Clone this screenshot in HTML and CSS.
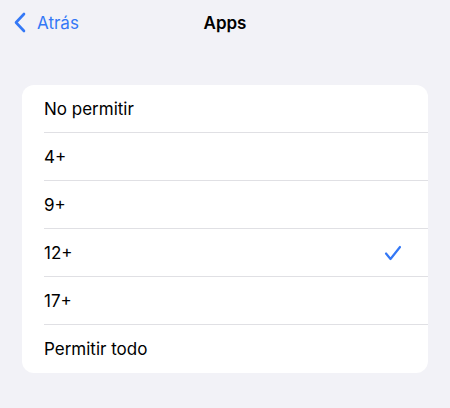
FILE: index.html
```html
<!DOCTYPE html>
<html>
<head>
<meta charset="utf-8">
<link rel="stylesheet" href="styles.css">
</head>
<body>
<div class="nav">
  <div class="back">
    <svg class="chev" width="12" height="21" viewBox="0 0 12 21"><path d="M10 2 L2 10.5 L10 19" fill="none" stroke="#3478f6" stroke-width="2.6" stroke-linecap="round" stroke-linejoin="round"/></svg>
    <span>Atrás</span>
  </div>
  <div class="title">Apps</div>
</div>
<div class="card">
  <div class="row"><span>No permitir</span></div>
  <div class="row"><span>4+</span></div>
  <div class="row"><span>9+</span></div>
  <div class="row"><span>12+</span>
    <svg class="check" width="18" height="16" viewBox="0 0 18 16"><path d="M2 8.5 L6.5 14 L16 2" fill="none" stroke="#3478f6" stroke-width="2.2" stroke-linecap="round" stroke-linejoin="round"/></svg>
  </div>
  <div class="row"><span>17+</span></div>
  <div class="row"><span>Permitir todo</span></div>
</div>
</body>
</html>
```
FILE: styles.css
```css
html, body { margin: 0; padding: 0; }
body {
  background: #f2f2f7;
  font-family: Inter, "Noto Sans", sans-serif;
  color: #000;
  width: 450px;
  height: 408px;
  overflow: hidden;
}
.nav {
  position: relative;
  height: 44px;
  padding-top: 1px;
  display: flex;
  align-items: center;
  justify-content: center;
}
.back {
  position: absolute;
  left: 14px;
  top: 1px;
  height: 44px;
  display: flex;
  align-items: center;
  gap: 11px;
  color: #3478f6;
  font-size: 17px;
}
.chev { display: block; margin-top: -1px; }
.title {
  font-size: 17px;
  font-weight: 600;
}
.card {
  margin: 40px 22px 0 22px;
  background: #fff;
  border-radius: 12px;
  overflow: hidden;
}
.row {
  height: 48px;
  margin-left: 22px;
  padding-right: 26px;
  display: flex;
  align-items: center;
  justify-content: space-between;
  font-size: 17px;
  border-bottom: 1px solid #e0e0e4;
  box-sizing: border-box;
}
.row:last-child { border-bottom: none; }
.check { display: block; }
```
